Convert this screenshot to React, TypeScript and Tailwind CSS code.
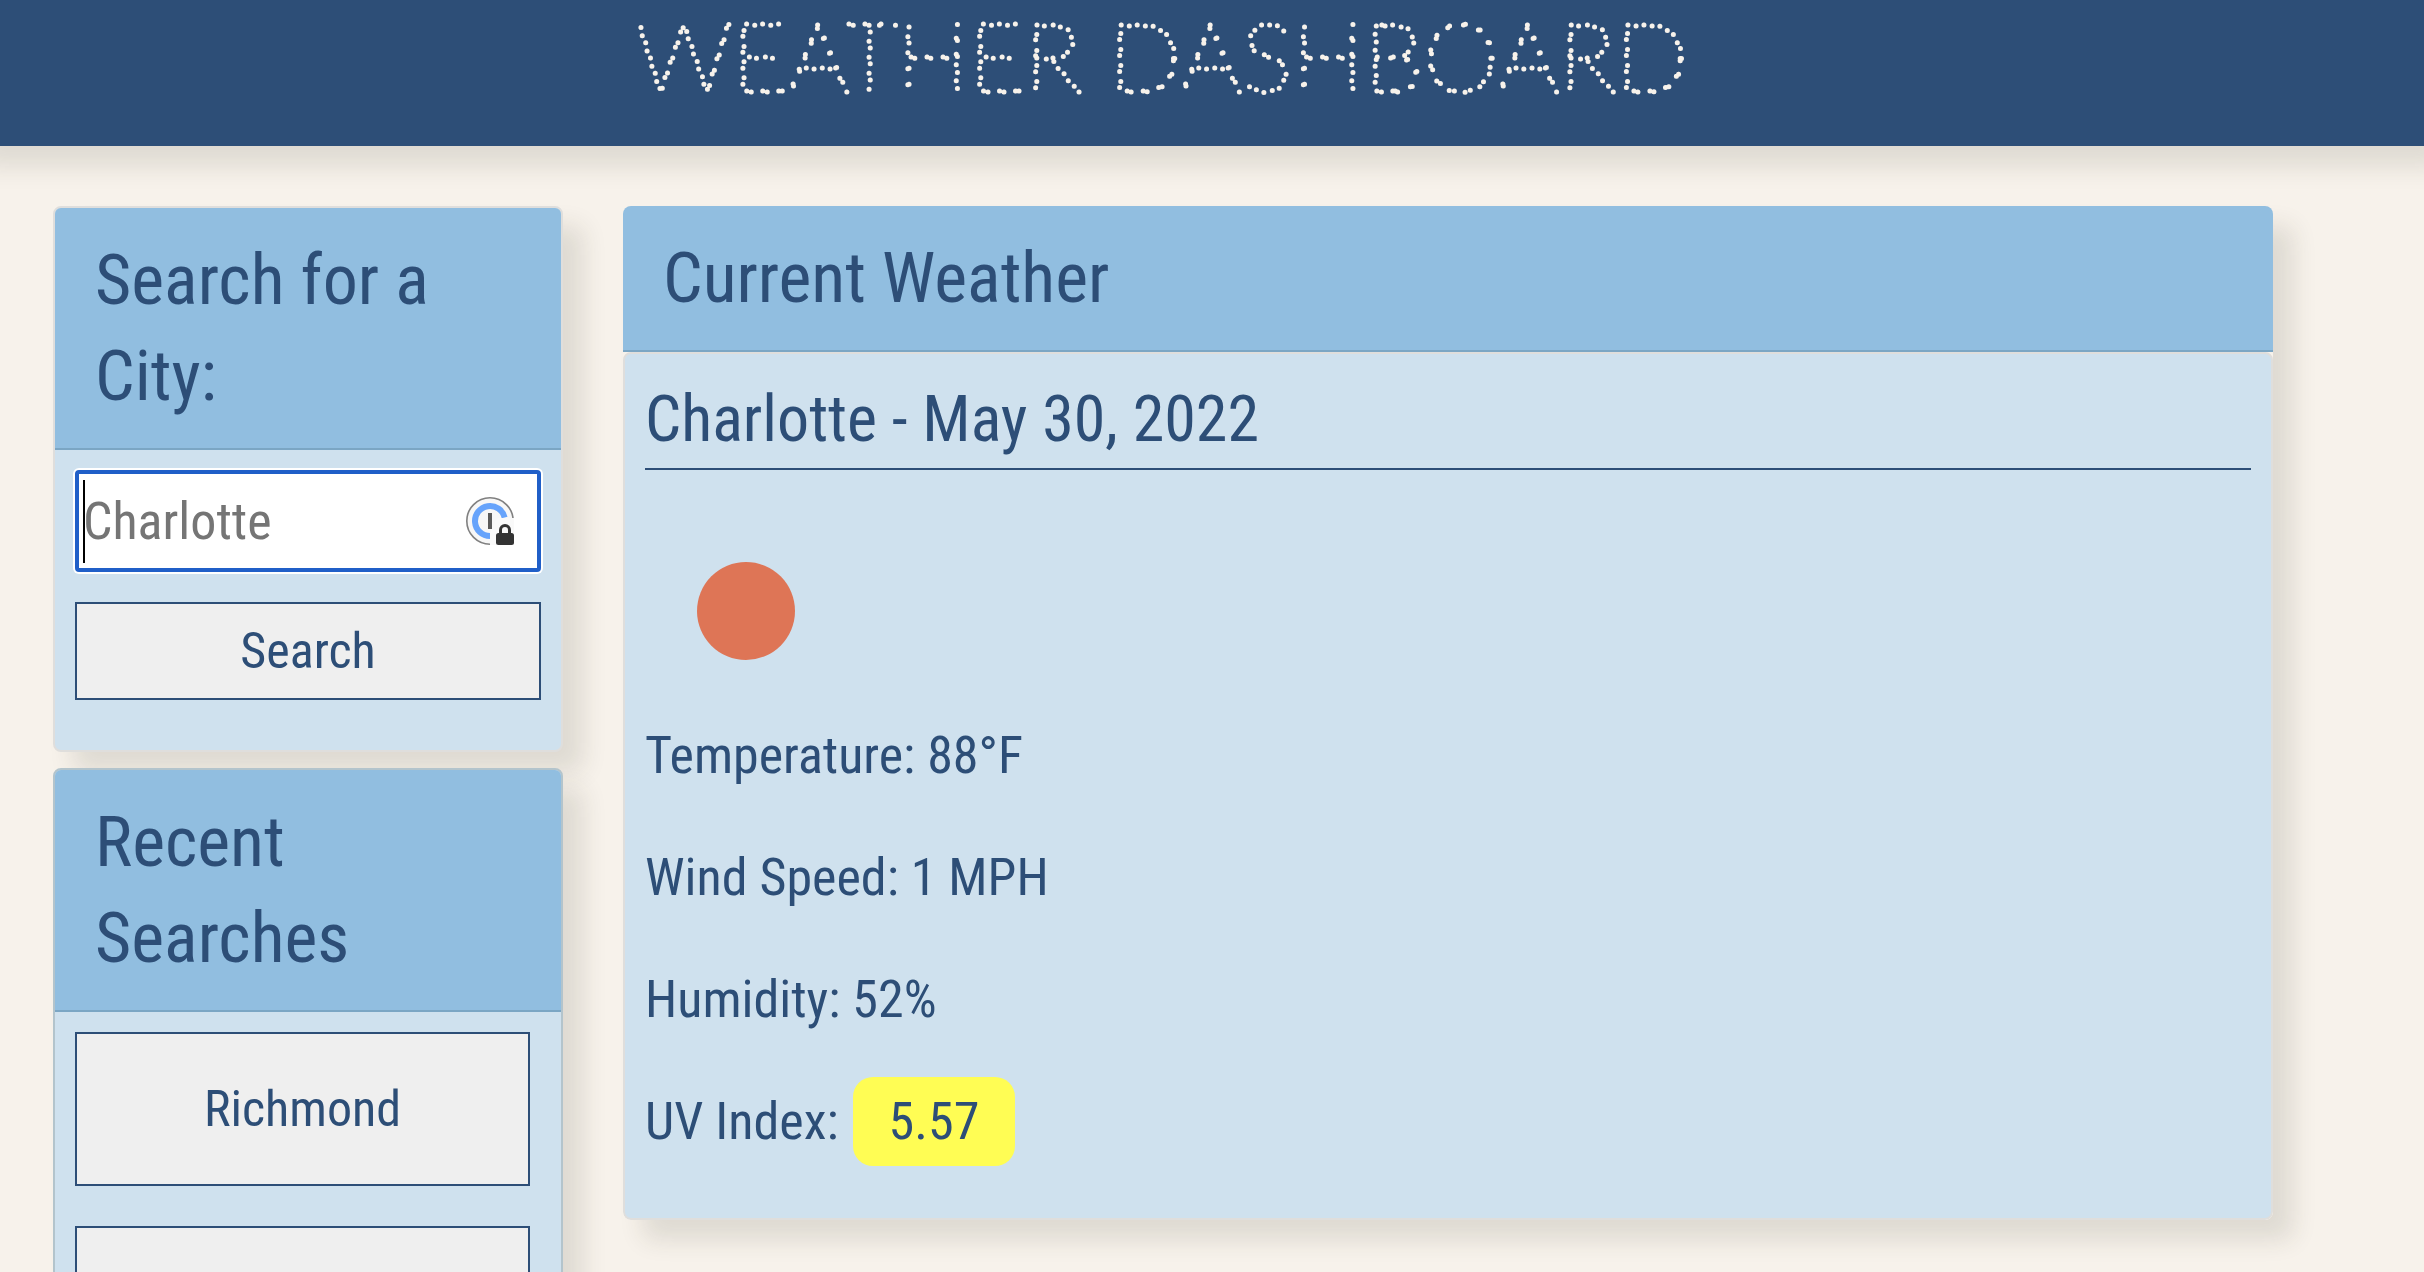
import type { ReactNode } from 'react';

const cardShadow = 'shadow-[20px_20px_24px_rgba(50,46,36,0.12)]';

function Heading({ children }: { children: ReactNode }) {
  return (
    <h2 className="border-b-2 border-[#7ba6c4] bg-[#91bee0] px-10 py-6 text-[70px] leading-[96px]">
      {children}
    </h2>
  );
}

function PasswordBadge() {
  return (
    <svg viewBox="0 0 48 48" className="size-12" aria-hidden="true">
      <circle cx="24" cy="24" r="23" fill="#f7f7f7" />
      <path d="M24 47.2A23.2 23.2 0 1 1 47.2 24" fill="none" stroke="#808080" strokeWidth="1.6" />
      <path d="M24 39A15 15 0 1 1 38.6 20.5" fill="none" stroke="#66a3fb" strokeWidth="6" />
      <path d="M24 48V36L30 23Q31 21 34 21H48V48Z" fill="#f9f9f9" />
      <rect x="22" y="16" width="4" height="16" fill="#5a5a5a" />
      <path d="M34.5 38V33a4.5 4.5 0 0 1 9 0V38" fill="none" stroke="#333333" strokeWidth="3" />
      <rect x="30" y="36" width="18" height="12" rx="2.5" fill="#333333" />
    </svg>
  );
}

const recent = ['Richmond', 'Charlotte'];

const readings = [
  ['Temperature', '88°F'],
  ['Wind Speed', '1 MPH'],
  ['Humidity', '52%'],
];

export default function App() {
  return (
    <div className="h-screen overflow-hidden bg-[#f7f2eb] font-['Roboto_Condensed','Open_Sans_Condensed',sans-serif] text-[#2d4e77]">
      <header className="bg-[#2d4e77] pr-[100px] shadow-[0_0_24px_20px_rgba(50,46,36,0.12)]">
        <h1>
          <svg className="block h-[146px] w-full" role="img" aria-label="WEATHER DASHBOARD">
            <text
              x="50%"
              y="92"
              textAnchor="middle"
              className="fill-none stroke-[#f7f2eb] stroke-[5px] font-['Lato',sans-serif] text-[96px] font-thin"
              strokeLinecap="round"
              strokeDasharray="0 16"
            >
              WEATHER DASHBOARD
            </text>
          </svg>
        </h1>
      </header>

      <div className="flex items-start gap-[60px] pt-[60px] pr-[151px] pl-[53px]">
        <aside className="flex w-[510px] shrink-0 flex-col gap-4">
          <section className={`${cardShadow} overflow-hidden rounded-lg border-2 border-[#dfdedc] bg-[#cfe1ee]`}>
            <Heading>
              <label htmlFor="city">Search for a City:</label>
            </Heading>
            <form className="flex flex-col px-5 pt-5 pb-[50px]" onSubmit={(e) => e.preventDefault()}>
              <div className="relative flex items-center rounded border-4 border-[#205fc8] bg-white ring-2 ring-white">
                <input
                  id="city"
                  type="text"
                  placeholder="Charlotte"
                  className="h-[94px] w-full bg-transparent pl-1 text-[52px] outline-none placeholder:text-[#757575]"
                />
                <span className="absolute top-1.5 left-1 h-[83px] w-0.5 bg-black" />
                <span className="absolute right-[23px]">
                  <PasswordBadge />
                </span>
              </div>
              <button type="submit" className="mt-[30px] h-[98px] border-2 border-[#2d4e77] bg-[#efefef] text-[50px]">
                Search
              </button>
            </form>
          </section>

          <section className={`${cardShadow} overflow-hidden rounded-lg border-2 border-[#b3c4cc] bg-[#cfe1ee]`}>
            <Heading>Recent Searches</Heading>
            <div className="flex flex-col gap-10 py-5 pr-[31px] pl-5">
              {recent.map((city) => (
                <button key={city} type="button" className="h-[154px] border-2 border-[#2d4e77] bg-[#efefef] text-[50px]">
                  {city}
                </button>
              ))}
            </div>
          </section>
        </aside>

        <main className={`${cardShadow} flex-1 overflow-hidden rounded-lg bg-[#f7f2eb]`}>
          <Heading>Current Weather</Heading>
          <div className="rounded-lg border-2 border-[#dfdedc] bg-[#cfe1ee] px-5 pt-5 pb-[60px]">
            <h3 className="border-b-2 border-[#2d4e77] pt-1 pb-1.5 text-[64px] leading-[84px]">Charlotte - May 30, 2022</h3>
            <svg viewBox="0 0 200 200" className="mt-10 size-[200px]" role="img" aria-label="Clear sky">
              <circle cx="101" cy="101" r="49" fill="#de7556" />
            </svg>
            <div className="mt-2.5 flex flex-col gap-[50px] text-[52px] leading-[72px]">
              {readings.map(([label, value]) => (
                <p key={label}>
                  {label}: {value}
                </p>
              ))}
              <p>
                UV Index:
                <span className="ml-3.5 rounded-[20px] bg-[#fffd54] px-[36px] py-3.5">5.57</span>
              </p>
            </div>
          </div>
        </main>
      </div>
    </div>
  );
}
